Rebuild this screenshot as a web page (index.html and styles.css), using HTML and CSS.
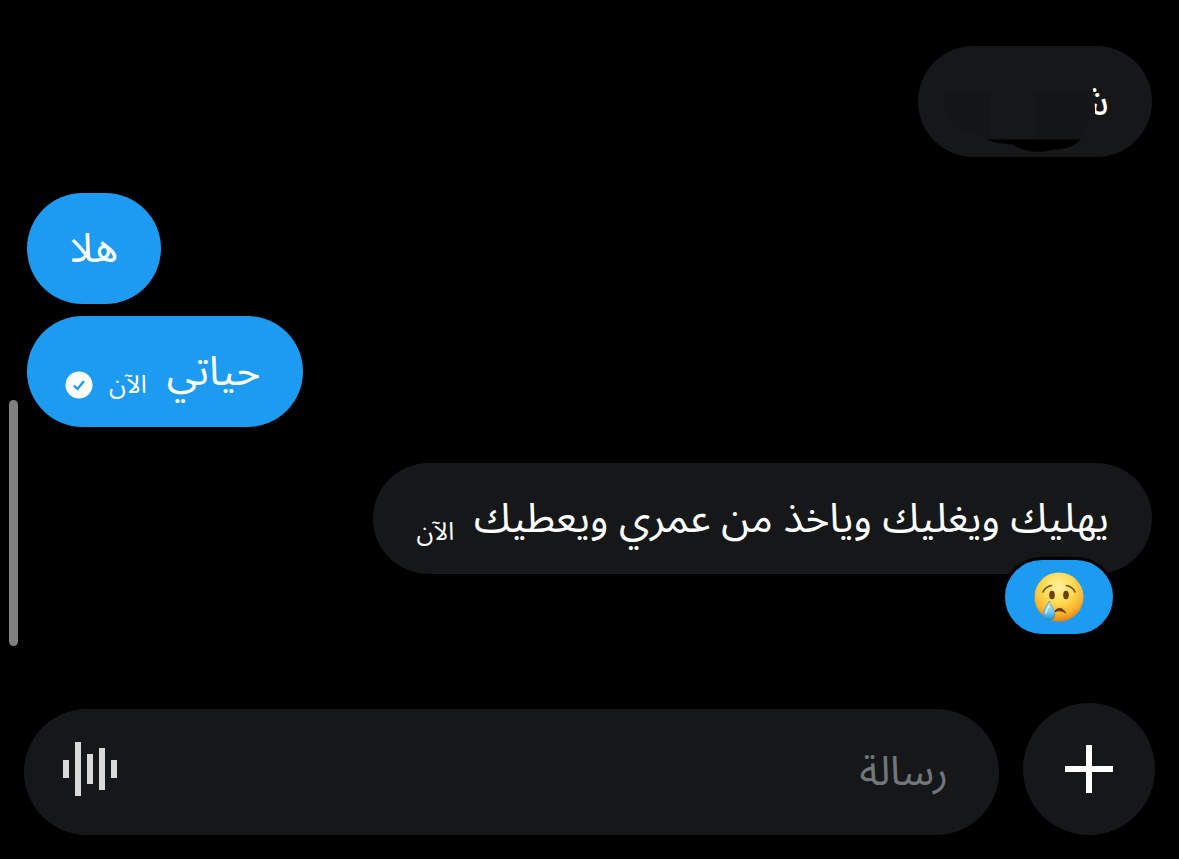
FILE: index.html
```
<!DOCTYPE html>
<html lang="ar" dir="rtl">
<head>
    <meta charset="UTF-8">
    <meta name="viewport" content="width=device-width, initial-scale=1.0">
    <title>الرسائل</title>
    <link rel="stylesheet" href="styles.css">
</head>
<body>
    <main class="chat">
        <div class="scrollbar"></div>

        <ul class="messages">
            <li class="message received">
                <div class="bubble">
                    <span class="text covered">شـ</span>
                    <svg class="cover" viewBox="0 0 234 110" aria-hidden="true">
                        <path class="cover-fill" d="M26 36H174L176 50L177 61V74L166 92H70L26 76Z"/>
                        <path class="cover-shade" d="M27 47H72V92Q38 86 27 65ZM117 47H168Q175 80 162 92H117Z"/>
                        <path class="cover-ink" d="M69 93H163C154 101 147 103 134 103C124 107 105 106 95 98C86 97 77 97 69 93Z"/>
                    </svg>
                </div>
            </li>
            <li class="message sent">
                <div class="bubble"><span class="text">هلا</span></div>
            </li>
            <li class="message sent grouped">
                <div class="bubble with-status">
                    <span class="text">حياتي</span>
                    <span class="meta">
                        <span class="time">الآن</span>
                        <svg class="check" viewBox="0 0 28 28" aria-hidden="true">
                            <circle cx="14" cy="14" r="13.5" fill="#fff"/>
                            <path d="M9 14.5L12.5 18L19 10" fill="none" stroke="#1d9bf0" stroke-width="2.4"/>
                        </svg>
                    </span>
                </div>
            </li>
            <li class="message received">
                <div class="bubble">
                    <span class="text">يهليك ويغليك وياخذ من عمري ويعطيك</span>
                    <span class="meta"><span class="time">الآن</span></span>
                    <button class="reaction" type="button" aria-label="تفاعل">
                        <svg viewBox="0 0 50 50" aria-hidden="true">
                            <defs>
                                <radialGradient id="face" cx="48%" cy="30%" r="70%">
                                    <stop offset="0" stop-color="#fff3a0"/>
                                    <stop offset="0.45" stop-color="#fedb55"/>
                                    <stop offset="0.8" stop-color="#fdb02b"/>
                                    <stop offset="1" stop-color="#df8218"/>
                                </radialGradient>
                                <linearGradient id="tear" x1="0" y1="0" x2="0" y2="1">
                                    <stop offset="0" stop-color="#c4ecfa"/>
                                    <stop offset="0.6" stop-color="#6cc6ec"/>
                                    <stop offset="1" stop-color="#2489c6"/>
                                </linearGradient>
                            </defs>
                            <circle cx="25" cy="25" r="24.5" fill="url(#face)"/>
                            <ellipse cx="18" cy="23" rx="2.8" ry="4.3" fill="#6a3d0c"/>
                            <ellipse cx="32" cy="23" rx="2.8" ry="4.3" fill="#6a3d0c"/>
                            <path d="M9 20Q11 15 17.5 13.5M32.5 13.5Q39 15 41 20" fill="none" stroke="#7b4a0b" stroke-width="1.6" stroke-linecap="round"/>
                            <path d="M20 40Q26 32 32 41Q26 37 20 40Z" fill="#6a3d0c" stroke="#6a3d0c" stroke-linejoin="round"/>
                            <path d="M15 29C13 34 9 38 9 42.500A6 6 0 0 0 21 42.500C21 38 17 34 15 29Z" fill="url(#tear)" stroke="#3a8fb8" stroke-width="0.6"/>
                            <path d="M15 34Q12 38 12 41" fill="none" stroke="#fff" stroke-width="1.6" stroke-linecap="round" opacity="0.7"/>
                        </svg>
                    </button>
                </div>
            </li>
        </ul>

        <form class="composer">
            <button class="add" type="button" aria-label="إضافة">
                <svg viewBox="0 0 48 48" aria-hidden="true">
                    <path d="M21 0H27V21H48V27H27V48H21V27H0V21H21Z" fill="#fff"/>
                </svg>
            </button>
            <div class="field">
                <input type="text" placeholder="رسالة" aria-label="رسالة">
                <button class="voice" type="button" aria-label="رسالة صوتية">
                    <svg viewBox="0 0 54 60" aria-hidden="true">
                        <path d="M0 18H6V36H0ZM12 0H18V54H12ZM24 12H30V42H24ZM36 6H42V48H36ZM48 18H54V36H48Z" fill="#d9d9d9"/>
                    </svg>
                </button>
            </div>
        </form>
    </main>
</body>
</html>
```
FILE: styles.css
```
* {
    box-sizing: border-box;
}
body {
    margin: 0;
    background-color: #000;
    color: #fff;
    font-family: "Noto Sans Arabic", "DejaVu Sans", sans-serif;
}
button {
    padding: 0;
    border: none;
    cursor: pointer;
}
svg {
    display: block;
}
.chat {
    position: relative;
    display: flex;
    flex-direction: column;
    min-height: 100vh;
}
.scrollbar {
    position: absolute;
    left: 9px;
    top: 400px;
    width: 9px;
    height: 246px;
    border-radius: 5px;
    background-color: #808080;
}
.messages {
    flex: 1;
    display: flex;
    flex-direction: column;
    margin: 0;
    padding: 46px 27px 100px;
    list-style: none;
}
.message {
    display: flex;
    margin-top: 36px;
}
.message:first-child {
    margin-top: 0;
}
.message.grouped {
    margin-top: 12px;
}
.sent {
    justify-content: flex-end;
}
.bubble {
    position: relative;
    display: flex;
    align-items: center;
    gap: 20px;
    min-height: 111px;
    padding: 0 43px;
    border-radius: 56px;
    background-color: #151719;
}
.sent .bubble {
    background-color: #1d9bf0;
}
.with-status {
    padding-left: 38px;
}
.text {
    font-size: 41px;
    line-height: 48px;
}
.meta {
    display: flex;
    align-items: center;
    gap: 16px;
    padding-top: 26px;
}
.time {
    font-size: 25px;
    line-height: 28px;
}
.check {
    width: 28px;
    height: 28px;
}

/* hidden part of the first message */
.covered {
    min-width: 148px;
}
.cover {
    position: absolute;
    inset: 0;
    width: 100%;
    height: 100%;
}
.cover-fill {
    fill: #151719;
}
.cover-shade {
    fill: #141517;
}
.cover-ink {
    fill: #000;
}

.reaction {
    position: absolute;
    right: 36px;
    bottom: -63px;
    display: flex;
    align-items: center;
    justify-content: center;
    width: 114px;
    height: 80px;
    border: 3px solid #000;
    border-radius: 40px;
    background-color: #1d9bf0;
}
.reaction svg {
    width: 50px;
    height: 50px;
}

.composer {
    display: flex;
    align-items: flex-end;
    gap: 24px;
    padding: 0 24px 24px;
}
.add {
    flex: none;
    display: flex;
    align-items: center;
    justify-content: center;
    width: 132px;
    height: 132px;
    border-radius: 50%;
    background-color: #151719;
}
.add svg {
    width: 48px;
    height: 48px;
}
.field {
    flex: 1;
    display: flex;
    align-items: center;
    min-width: 0;
    height: 126px;
    padding: 0 51px 0 39px;
    border-radius: 63px;
    background-color: #151719;
}
.field input {
    flex: 1;
    min-width: 0;
    padding: 0;
    border: none;
    outline: none;
    background: none;
    color: #fff;
    font-family: inherit;
    font-size: 41px;
    line-height: 48px;
}
.field input::placeholder {
    color: #71767b;
    opacity: 1;
}
.voice {
    flex: none;
    width: 54px;
    background: none;
}
.voice svg {
    width: 54px;
    height: 60px;
}
```
